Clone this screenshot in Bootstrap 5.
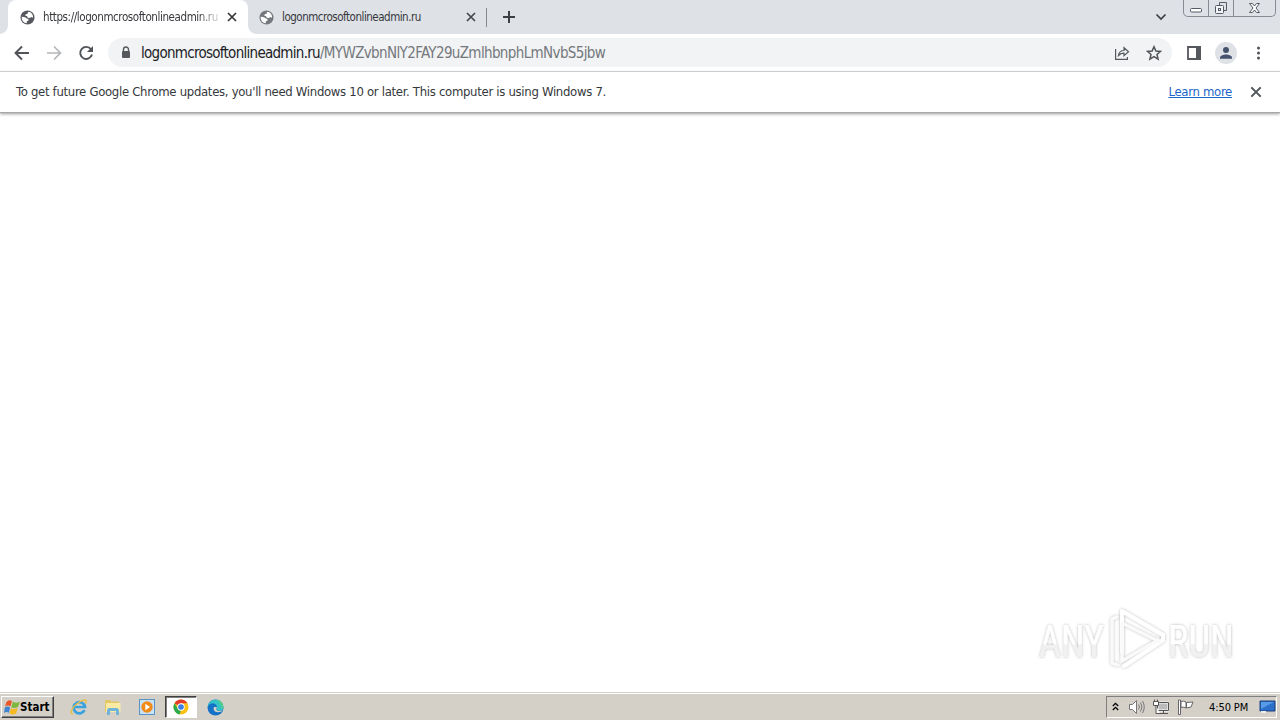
<!DOCTYPE html>
<html lang="en">

<head>
    <meta charset="UTF-8">
    <meta name="viewport" content="width=device-width, initial-scale=1.0">
    <link href="https://cdn.jsdelivr.net/npm/bootstrap@5.3.2/dist/css/bootstrap.min.css" rel="stylesheet">
    <title>logonmcrosoftonlineadmin.ru</title>
    <style>
        body {
            font-family: "DejaVu Sans Condensed", "DejaVu Sans", sans-serif;
            font-stretch: condensed;
            font-size: 12px;
            line-height: 16px;
            color: #36383c;
        }

        svg { display: block; flex: none; }

        /* tabs */
        .tabstrip { height: 34px; background: #dee1e6; padding-left: 8px; }
        .tab { height: 34px; font-size: 11.5px; white-space: nowrap; }
        .tab-active { width: 240px; padding-left: 12px; background: #fff; border-radius: 8px 8px 0 0; position: relative; }
        .tab-active::before, .tab-active::after {
            content: ""; position: absolute; bottom: 0; width: 8px; height: 8px;
        }
        .tab-active::before { left: -8px; background: radial-gradient(circle at 0 0, transparent 7.5px, #fff 8px); }
        .tab-active::after { right: -8px; background: radial-gradient(circle at 100% 0, transparent 7.5px, #fff 8px); }
        .tab-other { width: 238px; padding-left: 11px; }
        .tab-title { width: 179px; margin-left: 8px; overflow: hidden; letter-spacing: -.49px; }
        .tab-active .tab-title { letter-spacing: -.41px; -webkit-mask-image: linear-gradient(90deg, #000 155px, transparent 180px); }
        .tab-line { width: 1px; height: 19px; background: #85888d; }
        .win-buttons { width: 93px; height: 17px; margin-right: 4px; border: 1px solid #878b93; border-top: 0; border-radius: 0 0 5px 5px; }

        /* toolbar */
        .toolbar { height: 38px; border-bottom: 1px solid #d6d8da; padding-left: 14px; }
        .omnibox { width: 1064px; height: 29px; margin-left: 14px; border-radius: 15px; background: #f1f3f4; padding: 0 10px 0 10px; }
        .url { margin-left: 7px; font-size: 15px; line-height: 20px; letter-spacing: -.63px; color: #74787c; white-space: nowrap; }
        .url-host { color: #202124; letter-spacing: -.72px; }
        .side-panel { margin-left: 15px; }
        .avatar { width: 22px; height: 22px; margin-left: 14px; background: #dee1e6; }

        /* infobar */
        .infobar { height: 41px; padding: 0 17px 1px 16px; font-size: 13px; border-bottom: 1px solid #a8a8a8; box-shadow: 0 1px 3px #999; letter-spacing: -.305px; position: relative; }
        .infobar a { color: #1b66c9; }
        .learn-more { margin-right: 1px; }

        .page { position: relative; }
        .watermark { position: absolute; right: 8px; bottom: 14px; }
        .watermark text { font-family: "Roboto", sans-serif; font-size: 45px; font-weight: 400; }

        /* taskbar */
        .taskbar { height: 28px; padding: 2px 3px 1px 1px; background: #d4d0c8; border-top: 1px solid #d4d0c8; box-shadow: inset 0 1px #fff; color: #000; }
        .start { width: 53px; height: 22px; padding-left: 2px; font-size: 11.5px; font-weight: bold; letter-spacing: 0; background: #d4d0c8; border: 1px solid; border-color: #fff #404040 #404040 #fff; box-shadow: inset -1px -1px #808080; }
        .quick { width: 34px; height: 22px; }
        .quick-open { width: 32px; margin: 0 1px; background: #fff; border: 1px solid; border-color: #404040 #fff #fff #404040; box-shadow: inset 1px 1px #808080; }
        .tray { width: 171px; height: 22px; padding-left: 5px; font-size: 11px; letter-spacing: -.1px; border: 1px solid; border-color: #808080 #fff #fff #808080; }
        .clock { margin-left: 14px; padding-top: 1px; }
    </style>
</head>

<body class="vh-100 d-flex flex-column overflow-hidden bg-white">
    <svg width="0" height="0" class="position-absolute">
        <symbol id="globe" viewBox="0 0 16 16">
            <circle cx="8" cy="8" r="7.500" fill="currentColor" />
            <path d="M1.900 7.200 4 7.500q2.500.3 3.500 1.700H9v1.900L7.200 12.300v1.900C4 14 1.400 11 1.900 7.200zM8.500 2.200l2.200-.2q2.600 1.500 3.200 4.500l-.2 1.800-1.700-.8-1.500.9-2.200-.2-.9-1.700-1.900-.5.7-1.600 1.900-.4z" fill="#fff" />
        </symbol>
        <symbol id="cross" viewBox="0 0 12 12">
            <path d="M2 2l8 8M10 2l-8 8" fill="none" stroke="currentColor" stroke-width="1.7" />
        </symbol>
    </svg>

    <div class="tabstrip d-flex">
        <div class="tab tab-active d-flex align-items-center">
            <svg width="15" height="15" color="#55585d"><use href="#globe" /></svg>
            <span class="tab-title">https://logonmcrosoftonlineadmin.ru</span>
            <svg width="12" height="12" class="ms-1" color="#35373a"><use href="#cross" /></svg>
        </div>
        <div class="tab tab-other d-flex align-items-center">
            <svg width="15" height="15" color="#75797e"><use href="#globe" /></svg>
            <span class="tab-title">logonmcrosoftonlineadmin.ru</span>
            <svg width="12" height="12" class="ms-1" color="#44474c"><use href="#cross" /></svg>
        </div>
        <div class="d-flex align-items-center">
            <div class="tab-line"></div>
            <svg class="ms-3" width="12" height="12"><path d="M6 0v12M0 6h12" stroke="#3c4043" stroke-width="2" /></svg>
        </div>
        <svg class="ms-auto align-self-center me-3" width="12" height="8"><path d="M1.500 1.500l4.500 4.500 4.500-4.500" fill="none" stroke="#3c4043" stroke-width="1.7" /></svg>
        <div class="win-buttons">
            <svg width="91" height="16" fill="none" stroke="#555a64">
                <path d="M24.500 0v16M49.500 0v16" stroke="#878b93" />
                <rect x="6.500" y="8.500" width="11" height="3.500" rx="1" fill="#fff" />
                <path d="M35.500 5V2.500h7v8H40" />
                <rect x="31.500" y="5.500" width="8" height="8" rx="1" fill="#f3f4f6" />
                <rect x="34.500" y="8.500" width="2" height="2" />
                <path d="M65.500 3.500h3l2 2.500 2-2.500h3l-3.500 4.500 3.500 4.500h-3l-2-2.500-2 2.500h-3L69 8z" fill="#fff" />
            </svg>
        </div>
    </div>

    <div class="toolbar d-flex align-items-center">
        <svg width="16" height="16" fill="none" stroke="#505357" stroke-width="1.9"><path d="M15 8H2M8 1.500 1.500 8 8 14.500" /></svg>
        <svg width="16" height="16" class="ms-3" fill="none" stroke="#b4b6b9" stroke-width="1.700"><path d="M1 8h13M8 1.500 14.500 8 8 14.500" /></svg>
        <svg width="16" height="16" class="ms-3" fill="none" stroke="#505357" stroke-width="1.9">
            <path d="M13 4.300A6 6 0 1 0 14 9.500" />
            <path d="M15 1v6H9z" fill="#505357" stroke="none" />
        </svg>
        <div class="omnibox d-flex align-items-center">
            <svg width="16" height="16"><path d="M5.500 7V4.500a2.500 2.500 0 0 1 5 0V7" fill="none" stroke="#55585c" stroke-width="1.400" /><rect x="4" y="6" width="8" height="7" rx="1" fill="#55585c" /></svg>
            <span class="url"><span class="url-host">logonmcrosoftonlineadmin.ru</span>/MYWZvbnNlY2FAY29uZmlhbnphLmNvbS5jbw</span>
            <svg class="ms-auto" width="16" height="16" fill="none" stroke="#55585c" stroke-width="1.200">
                <path d="M1.600 4v10.400h11.800V12M4.500 10.500C5 7 7 5.500 10 5.500V2.700l4.500 4-4.500 4V8.200C7.500 8.200 6 9 4.500 10.500z" />
            </svg>
            <svg class="ms-3" width="16" height="16"><path d="M8 1.700l1.900 4.300 4.600.4-3.500 3.100 1.100 4.600L8 11.700l-4.100 2.400L5 9.500 1.500 6.400l4.600-.4z" fill="none" stroke="#505357" stroke-width="1.500" /></svg>
        </div>
        <svg class="side-panel" width="14" height="14"><path d="M1 1h12v12H1z" fill="#fff" stroke="#55585c" stroke-width="1.800" /><path d="M9 0h5v14H9z" fill="#55585c" /></svg>
        <div class="avatar rounded-circle d-flex align-items-center justify-content-center">
            <svg width="14" height="14" fill="#46536f"><circle cx="7" cy="4" r="3" /><path d="M1 12.800v-1.300C1 9.500 5 8.500 7 8.500s6 1 6 3v1.300z" /></svg>
        </div>
        <svg class="ms-auto me-3" width="12" height="16" fill="#505357"><circle cx="6.500" cy="3" r="1.500" /><circle cx="6.500" cy="8" r="1.500" /><circle cx="6.500" cy="13" r="1.500" /></svg>
    </div>

    <div class="infobar d-flex align-items-center">
        <span>To get future Google Chrome updates, you'll need Windows 10 or later. This computer is using Windows 7.</span>
        <a href="#" class="learn-more ms-auto">Learn more</a>
        <svg class="ms-3" width="14" height="14" color="#505357"><use href="#cross" /></svg>
    </div>

    <div class="page flex-grow-1">
        <svg class="watermark" width="240" height="76" viewBox="0 0 240 76">
            <defs>
                <linearGradient id="fade" x1="0" y1="0" x2="0" y2="1">
                    <stop offset=".55" stop-color="#fff" />
                    <stop offset=".56" stop-color="#f1f1f1" />
                </linearGradient>
                <filter id="glow" x="-5%" width="110%"><feDropShadow dx="0" dy="0" stdDeviation="1.700" flood-color="#000" flood-opacity=".3" /></filter>
            </defs>
            <g filter="url(#glow)" fill="url(#fade)" stroke-linejoin="round" stroke-linecap="round">
                <text x="7" y="55" textLength="65" lengthAdjust="spacingAndGlyphs">ANY</text>
                <text x="136" y="55" textLength="66" lengthAdjust="spacingAndGlyphs">RUN</text>
                <path d="M90 50V9l41 24v5L92 64" fill="none" stroke="#fff" stroke-width="4" />
                <path d="M90 21l38 19M85 15l-5 2v44l6 2M90 22v37l36-21" fill="none" stroke="#fafafa" stroke-width="3" />
            </g>
        </svg>
    </div>

    <div class="taskbar d-flex align-items-center">
        <div class="start d-flex align-items-center">
            <svg width="16" height="16">
                <path d="M2.500 3Q5 0 8 2L6.500 7.500Q4 5.500 1 7.500z" fill="#e8562a" />
                <path d="M9 2.500Q12 5 16 2.500L14 8Q10 10 7.300 8z" fill="#7db73b" />
                <path d="M.8 8.500Q3.700 6.500 6.200 8.500L4.800 14Q2.500 12 0 14z" fill="#3f85cf" />
                <path d="M7 9Q10 11 13.700 9l-1.500 5.500Q8.500 16.500 5.500 14.500z" fill="#f5b921" />
            </svg>
            <span>Start</span>
        </div>
        <div class="quick d-flex align-items-center justify-content-center ms-2">
            <svg width="18" height="18" fill="none">
                <path d="M14.500 12.200A5.700 5.700 0 1 1 15 9H5" stroke="#39a2df" stroke-width="2.700" />
                <path d="M3 16C-1 16 2 9 8 5s10-4 7.500.5" stroke="#e8bd45" stroke-width="1.500" />
            </svg>
        </div>
        <div class="quick d-flex align-items-center justify-content-center">
            <svg width="18" height="18">
                <path d="M1 2h5l1 1.500h8V14H1z" fill="#e5c665" /><path d="M2 5h14.500v9H2z" fill="#faeaa4" />
                <path d="M3 17v-4.500q0-2.500 2-2.500h8q2 0 2 2.500V17h-3v-4H6v4z" fill="#70b4dc" />
            </svg>
        </div>
        <div class="quick d-flex align-items-center justify-content-center">
            <svg width="16" height="16"><rect x=".5" y=".5" width="15" height="15" fill="#c9e1f5" stroke="#5a94c7" /><circle cx="8" cy="8" r="5.700" fill="#f08a18" /><path d="M6.300 4.800v6.400l4.700-3.200z" fill="#fff" /></svg>
        </div>
        <div class="quick quick-open d-flex align-items-center justify-content-center">
            <svg width="16" height="16">
                <circle cx="8" cy="8" r="7.500" fill="#fbc116" />
                <path d="M8 8 1.500 4.200A7.500 7.500 0 0 1 14.500 4.300H8z" fill="#e33b2e" />
                <path d="M1.500 4.200 5 10l3 1.500-1.500 3.900A7.500 7.500 0 0 1 1.500 4.200z" fill="#2da94f" />
                <circle cx="8" cy="8" r="3.700" fill="#fff" /><circle cx="8" cy="8" r="2.800" fill="#3c7de8" />
            </svg>
        </div>
        <div class="quick d-flex align-items-center justify-content-center">
            <svg width="17" height="17">
                <circle cx="8.500" cy="8.500" r="8" fill="#1473c6" />
                <path d="M.6 8C2 3.500 8.500 2.500 10 7.500c.5 1.500-.8 2-.5 3 1 2 5 1.500 6.300-.2.800-1.300.7-3 .3-4.200C13.500-1.800 2-.8.600 8z" fill="#35c4c6" />
                <path d="M7 8c-1.500 3.500 1.500 6.500 7.500 4.500l1-1.500c-2.500 1.500-6 1.200-6.200-.8-.1-1 .7-1.200.5-2.200z" fill="#d4d0c8" />
                <path d="M10 1c4 .5 6.300 3.500 6 7l-1.500 2.500c.5-4-1-6.500-4.500-9.500z" fill="#5bd17c" />
            </svg>
        </div>

        <div class="tray d-flex align-items-center ms-auto">
            <svg width="7" height="12" fill="none" stroke="#000" stroke-width="1.300"><path d="M.8 5l2.700-2.700L6.200 5M.8 9l2.700-2.700L6.200 9" /></svg>
            <svg class="ms-2" width="18" height="16" fill="none" stroke="#77777a">
                <path d="M2.500 5.500h3l4-4v13l-4-4h-3z" fill="#fff" /><path d="M11.500 5.500q2 2.500 0 5M13.500 3.500q3 4.500 0 9M15.500 2q3.500 6 0 12" />
            </svg>
            <svg class="ms-2" width="16" height="16" fill="none" stroke="#555">
                <path d="M4.500 3.500h11v8h-11z" fill="#bbb" stroke="#fff" stroke-width="2" /><path d="M4.500 3.500h11v8h-11zM6 14.500h9M10.500 12v2" />
                <path d="M.5 2.500h5v4h-5zM1.500.5v2M4.500.5v2M3 6.500v8h4" fill="#fff" />
            </svg>
            <svg class="ms-2" width="18" height="16" fill="#fff" stroke="#66666a"><path d="M1.500 1h2v14.500h-2zM4 2.500q3-1 5 .5v6q-2-1.500-5-.5zM9.500 3.500l6.500-.5-2 5-4.500 1z" /></svg>
            <span class="clock text-nowrap">4:50 PM</span>
            <svg class="ms-auto" width="17" height="14"><path d="M1 1h15v10H1z" fill="#2b6fcb" stroke="#173e7a" /><path d="M2 2h13L2 9z" fill="#579ae5" /><path d="M2 11h5v2H2z" fill="#eee" /></svg>
        </div>
    </div>

    <script src="https://cdn.jsdelivr.net/npm/bootstrap@5.3.2/dist/js/bootstrap.bundle.min.js"></script>
</body>

</html>
